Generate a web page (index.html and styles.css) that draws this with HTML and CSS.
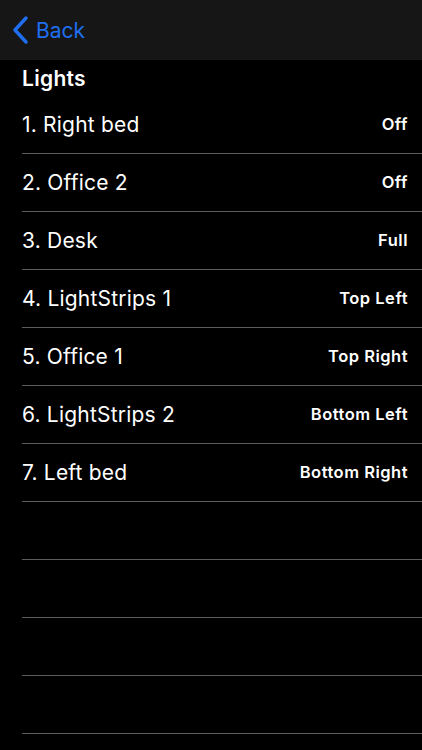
FILE: index.html
```html
<!DOCTYPE html>
<html>
<head>
<meta charset="utf-8">
<link rel="stylesheet" href="styles.css">
</head>
<body>
<header class="navbar">
  <a class="back">
    <svg class="chevron" width="18" height="28" viewBox="0 0 18 28"><path d="M15 2 L4 14 L15 26" fill="none" stroke="#1f6ff0" stroke-width="3.4" stroke-linecap="round" stroke-linejoin="round"/></svg>
    <span>Back</span>
  </a>
</header>
<main class="content">
  <h1 class="section-title">Lights</h1>
  <ul class="list">
    <li class="row"><span class="name">1. Right bed</span><span class="value">Off</span></li>
    <li class="row"><span class="name">2. Office 2</span><span class="value">Off</span></li>
    <li class="row"><span class="name">3. Desk</span><span class="value">Full</span></li>
    <li class="row"><span class="name">4. LightStrips 1</span><span class="value">Top Left</span></li>
    <li class="row"><span class="name">5. Office 1</span><span class="value">Top Right</span></li>
    <li class="row"><span class="name">6. LightStrips 2</span><span class="value">Bottom Left</span></li>
    <li class="row"><span class="name">7. Left bed</span><span class="value">Bottom Right</span></li>
    <li class="row empty"></li>
    <li class="row empty"></li>
    <li class="row empty"></li>
    <li class="row empty"></li>
  </ul>
</main>
</body>
</html>
```
FILE: styles.css
```css
html, body {
  margin: 0;
  padding: 0;
  background: #000;
  color: #fff;
  font-family: Inter, "Liberation Sans", Arial, sans-serif;
  height: 750px;
  overflow: hidden;
}
.navbar {
  height: 60px;
  background: #161616;
  display: flex;
  align-items: center;
}
.back {
  display: flex;
  align-items: center;
  gap: 7px;
  padding-left: 11px;
  color: #1f6ff0;
  font-size: 21px;
}
.chevron {
  display: block;
}
.content {
  padding-left: 22px;
}
.section-title {
  margin: 0;
  height: 36px;
  font-size: 21px;
  font-weight: 600;
  letter-spacing: 0.3px;
  display: flex;
  align-items: center;
  padding-top: 1px;
  box-sizing: border-box;
}
.list {
  list-style: none;
  margin: 0;
  padding: 0;
}
.row {
  height: 57px;
  border-bottom: 1px solid #5c5c5c;
  display: flex;
  align-items: center;
  justify-content: space-between;
  padding-right: 14px;
}
.name {
  font-size: 21px;
  letter-spacing: 0.2px;
}
.value {
  font-size: 16.5px;
  font-weight: 600;
  letter-spacing: 0.5px;
  padding-bottom: 1px;
}
```
